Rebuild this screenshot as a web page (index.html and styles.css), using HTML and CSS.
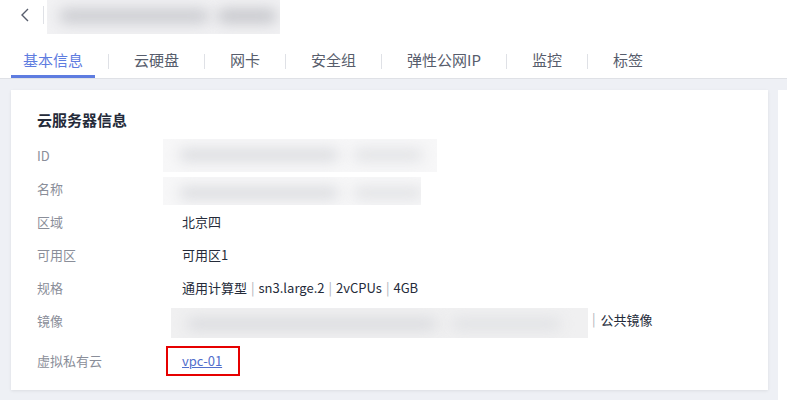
FILE: index.html
```html
<!DOCTYPE html>
<html lang="zh-CN">

<head>
  <meta charset="UTF-8" />
  <meta name="viewport" content="width=device-width, initial-scale=1.0" />
  <title>云服务器详情</title>
  <link rel="stylesheet" href="styles.css">
</head>

<body>
  <div class="top">
    <div class="title-bar">
      <a class="back" href="javascript:;">
        <svg width="10" height="14" viewBox="0 0 10 14"><path d="M8 1 L2 7 L8 13" fill="none" stroke="#575d6c" stroke-width="1.4"/></svg>
      </a>
      <span class="bar-line"></span>
      <div class="name-mask"><i></i><i class="b"></i></div>
    </div>
    <ul class="tabs">
      <li><a class="active" href="javascript:;">基本信息</a></li>
      <li><a href="javascript:;">云硬盘</a></li>
      <li><a href="javascript:;">网卡</a></li>
      <li><a href="javascript:;">安全组</a></li>
      <li><a href="javascript:;">弹性公网IP</a></li>
      <li><a href="javascript:;">监控</a></li>
      <li><a href="javascript:;">标签</a></li>
    </ul>
  </div>

  <div class="main">
    <div class="card">
      <h3>云服务器信息</h3>
      <div class="row">
        <span class="label">ID</span>
        <span class="value"><span class="mask mask-id"><i></i><i class="b"></i></span></span>
      </div>
      <div class="row">
        <span class="label">名称</span>
        <span class="value"><span class="mask mask-name"><i></i><i class="b"></i></span></span>
      </div>
      <div class="row">
        <span class="label">区域</span>
        <span class="value">北京四</span>
      </div>
      <div class="row">
        <span class="label">可用区</span>
        <span class="value">可用区1</span>
      </div>
      <div class="row">
        <span class="label">规格</span>
        <span class="value">通用计算型<em>|</em>sn3.large.2<em>|</em>2vCPUs<em>|</em>4GB</span>
      </div>
      <div class="row row-image">
        <span class="label">镜像</span>
        <span class="value"><span class="mask mask-image"><i></i><i class="b"></i></span><em class="first">|</em>公共镜像</span>
      </div>
      <div class="row row-vpc">
        <span class="label">虚拟私有云</span>
        <span class="value"><span class="mark"><a href="javascript:;">vpc-01</a></span></span>
      </div>
    </div>
    <div class="side"></div>
  </div>
</body>

</html>
```

FILE: styles.css
```css
* {
  margin: 0;
  padding: 0;
  box-sizing: border-box;
}

body {
  width: 787px;
  height: 400px;
  overflow: hidden;
  background: #eef0f5;
  font-family: "Noto Sans CJK SC", "Liberation Sans", sans-serif;
  color: #252b3a;
}

.top {
  background: #fff;
  border-bottom: 1px solid #dfe1e6;
}

.title-bar {
  height: 34px;
  display: flex;
  align-items: flex-start;
}

.back {
  width: 20px;
  height: 14px;
  margin: 8px 0 0 20px;
  display: flex;
}

.bar-line {
  width: 1px;
  height: 18px;
  margin: 6px 3px 0 3px;
  background: #dfe1e6;
}

.name-mask {
  width: 233px;
  height: 34px;
  background: #f1f1f3;
  position: relative;
  overflow: hidden;
}

.name-mask i,
.mask i {
  position: absolute;
  display: block;
  border-radius: 8px;
  background: #c9cacf;
  filter: blur(7px);
}

.name-mask i {
  left: 12px;
  top: 9px;
  width: 150px;
  height: 14px;
}

.name-mask i.b {
  left: 170px;
  width: 60px;
  background: #c4c5ca;
}

.tabs {
  list-style: none;
  display: flex;
  margin: 10px 0 0 11px;
  height: 34px;
}

.tabs li {
  display: flex;
  align-items: stretch;
}

.tabs li + li::before {
  content: "";
  width: 1px;
  height: 15px;
  margin: 10px 13px 0 13px;
  background: #dfe1e6;
}

.tabs a {
  display: block;
  padding: 1px 12px 0;
  font-size: 15px;
  line-height: 30px;
  color: #575d6c;
  text-decoration: none;
  border-bottom: 3px solid transparent;
}

.tabs a.active {
  color: #5e7ce0;
  border-color: #5e7ce0;
}

.main {
  display: flex;
  padding: 11px 0 0 11px;
}

.card {
  width: 757px;
  height: 300px;
  background: #fff;
  box-shadow: 0 1px 3px rgba(0, 0, 0, 0.08);
  padding: 19px 26px 0;
}

.side {
  width: 9px;
  height: 310px;
  margin-left: 10px;
  background: #fff;
}

.card h3 {
  font-size: 15px;
  font-weight: bold;
  line-height: 22px;
  margin-bottom: 8px;
}

.row {
  display: flex;
  align-items: center;
  height: 33px;
  font-size: 13px;
}

.label {
  width: 145px;
  flex: none;
  color: #8a8e99;
}

.value {
  color: #252b3a;
  white-space: nowrap;
}

.value em {
  font-style: normal;
  color: #adb0b8;
  margin: 0 4px;
}

.value em.first {
  margin: 0 5px 0 0;
}

.mask {
  position: relative;
  display: inline-block;
  vertical-align: middle;
  overflow: hidden;
  background: #f7f7f8;
}

.mask-id {
  width: 274px;
  height: 33px;
  margin-left: -19px;
}

.mask-name {
  width: 258px;
  height: 28px;
  margin: 4px 0 0 -19px;
}

.mask-image {
  width: 417px;
  height: 30px;
  margin: 4px 4px 0 -11px;
  background: #f0f0f1;
}

.mask i {
  left: 16px;
  top: 10px;
  width: 160px;
  height: 12px;
  background: #d9dade;
}

.mask i.b {
  left: 190px;
  width: 70px;
  background: #e0e1e4;
}

.mask-image i {
  width: 250px;
}

.mask-image i.b {
  left: 280px;
  width: 110px;
}

.row-vpc {
  margin-top: 7px;
}

.mark {
  display: block;
  width: 74px;
  height: 30px;
  margin-left: -16px;
  padding-left: 14px;
  border: 2px solid #e60000;
  line-height: 26px;
}

.mark a {
  color: #526ecc;
  text-decoration: underline;
}
```
